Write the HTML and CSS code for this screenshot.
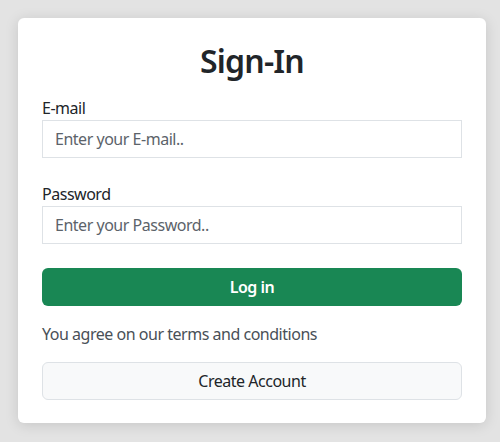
FILE: index.html
```html
<!DOCTYPE html>
<html lang="en">
  <head>
    <meta charset="UTF-8" />
    <meta name="viewport" content="width=device-width, initial-scale=1.0" />
    <title>Sign-In</title>
    <link rel="stylesheet" href="styles.css">
  </head>
  <body>
    <div class="login-card">
      <h2 class="title">Sign-In</h2>
      <form class="login-form">
        <div class="field">
          <label for="email">E-mail</label>
          <input type="email" id="email" placeholder="Enter your E-mail.." />
        </div>
        <div class="field">
          <label for="password">Password</label>
          <input type="password" id="password" placeholder="Enter your Password.." />
        </div>
        <button type="submit" class="btn-login">Log in</button>
      </form>
      <p class="terms">You agree on our terms and conditions</p>
      <button class="btn-register">Create Account</button>
    </div>
  </body>
</html>
```

FILE: styles.css
```css
body {
  background-color: #e3e3e3;
  color: #212529;
  margin: 0;
  padding: 18px 14px 18px 18px;
  font-family: "Noto Sans", "Open Sans", sans-serif;
  font-size: 16px;
  line-height: 1.5;
  letter-spacing: -0.03em;
}
.login-card {
  background: #fff;
  border-radius: 6px;
  padding: 24px 24px 23px;
  box-shadow: 0 2px 14px rgba(0, 0, 0, 0.13);
}
.title {
  text-align: center;
  font-size: 32px;
  font-weight: 600;
  line-height: 1.2;
  letter-spacing: -0.025em;
  margin: 0 0 16px;
}
.login-form {
  display: flex;
  flex-direction: column;
  gap: 24px;
}
.field label {
  display: block;
}
.field input {
  display: block;
  box-sizing: border-box;
  width: 100%;
  height: 38px;
  padding: 6px 12px;
  border: 1px solid #dee2e6;
  border-radius: 0;
  font-family: inherit;
  font-size: 16px;
  letter-spacing: inherit;
  color: #212529;
}
.field input::placeholder {
  color: #5c636a;
}
.btn-login {
  height: 38px;
  border: none;
  border-radius: 6px;
  background: #198754;
  color: #fff;
  font-family: inherit;
  font-size: 16px;
  font-weight: 600;
  letter-spacing: inherit;
}
.terms {
  margin: 16px 0;
  color: #495057;
}
.btn-register {
  display: block;
  width: 100%;
  height: 38px;
  border: 1px solid #dee2e6;
  border-radius: 6px;
  background: #f8f9fa;
  color: #212529;
  font-family: inherit;
  font-size: 16px;
  letter-spacing: inherit;
}
```
